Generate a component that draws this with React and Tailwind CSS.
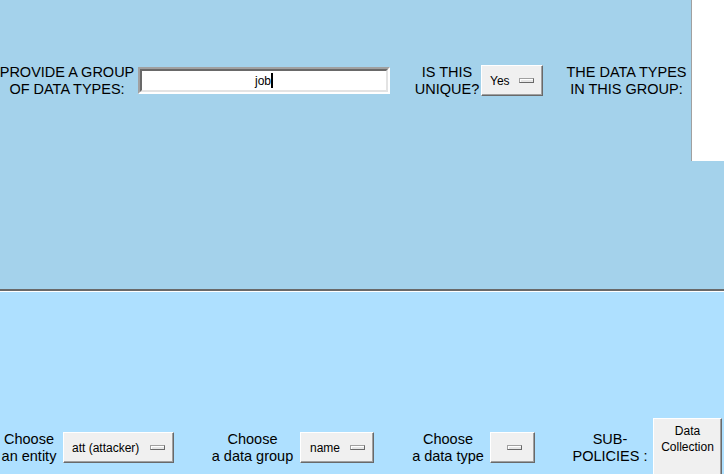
import React from "react";

const LABEL = { fontFamily: '"Liberation Sans", Arial, sans-serif' };
const UI = { fontFamily: '"Liberation Sans", Arial, sans-serif' };

function Label({ lines, w, ml = 0, mlClass }) {
  return (
    <div
      className={`flex flex-col items-center justify-center shrink-0 text-[14.5px] leading-[16.5px] text-black ${mlClass || ""} ${w}`}
      style={LABEL}
    >
      {lines.map((l, i) => (
        <span key={i} className="whitespace-nowrap">
          {l}
        </span>
      ))}
    </div>
  );
}

function Indicator() {
  return (
    <span className="block w-[15px] h-[5px] shrink-0 bg-[#e6e6e6] border border-t-[#a0a0a0] border-l-[#a0a0a0] border-r-[#696969] border-b-[#696969] shadow-[inset_1px_1px_0_#ffffff]" />
  );
}

function MenuButton({ text, cls }) {
  return (
    <div
      className={`h-[31px] shrink-0 bg-[#f0f0f0] border border-t-white border-l-white border-r-[#696969] border-b-[#696969] shadow-[inset_-1px_-1px_0_#a0a0a0] flex items-center text-[12px] text-black ${cls}`}
      style={UI}
    >
      {text ? <span className="whitespace-nowrap">{text}</span> : null}
      <Indicator />
    </div>
  );
}

export default function App() {
  return (
    <div className="w-[724px] h-[474px] overflow-hidden flex flex-col">
      {/* top panel */}
      <div className="h-[289px] shrink-0 bg-[#a4d2eb]">
        <div className="flex items-center">
          <Label lines={["PROVIDE A GROUP", "OF DATA TYPES:"]} w="w-[134px]" />
          <div className="ml-[4px] w-[252px] h-[27px] shrink-0 border-2 border-t-[#a0a0a0] border-l-[#a0a0a0] border-r-white border-b-white">
            <div className="w-full h-full border-2 border-t-[#696969] border-l-[#696969] border-r-[#e3e3e3] border-b-[#e3e3e3] bg-white flex items-center justify-center text-[12px] text-black" style={UI}>
              <span>job</span>
              <span className="block w-[2px] h-[15px] bg-black" />
            </div>
          </div>
          <Label lines={["IS THIS", "UNIQUE?"]} w="w-[64px]" mlClass="ml-[25px]" />
          <MenuButton text="Yes" cls="ml-[2px] w-[62px] justify-between pl-[8px] pr-[8px]" />
          <Label lines={["THE DATA TYPES", "IN THIS GROUP:"]} w="w-[125px]" mlClass="ml-[21px]" />
          <div className="ml-[2px] w-[80px] h-[161px] shrink-0 bg-white border-l border-l-[#a0a0a0]" />
        </div>
      </div>
      {/* separator */}
      <div className="h-[2px] shrink-0 bg-[#696969]" />
      <div className="h-[1px] shrink-0 bg-white" />
      {/* bottom panel */}
      <div className="flex-1 bg-[#aee0ff] pt-[126px]">
        <div className="flex items-center">
          <Label lines={["Choose", "an entity"]} w="w-[58px]" />
          <MenuButton text="att (attacker)" cls="ml-[5px] w-[111px] justify-between pl-[8px] pr-[8px]" />
          <Label lines={["Choose", "a data group"]} w="w-[85px]" mlClass="ml-[36px]" />
          <MenuButton text="name" cls="ml-[5px] w-[74px] justify-between pl-[9px] pr-[8px]" />
          <Label lines={["Choose", "a data type"]} w="w-[74px]" mlClass="ml-[37px]" />
          <MenuButton text="" cls="ml-[5px] w-[45px] justify-end pr-[12px]" />
          <Label lines={["SUB-", "POLICIES :"]} w="w-[76px]" mlClass="ml-[37px]" />
          <div
            className="ml-[5px] w-[69px] h-[59px] shrink-0 bg-[#f0f0f0] border border-t-white border-l-white border-r-[#696969] border-b-[#696969] shadow-[inset_-1px_-1px_0_#a0a0a0] flex flex-col items-center pt-[5px] text-[12px] leading-[15.5px] text-black"
            style={UI}
          >
            <span>Data</span>
            <span>Collection</span>
          </div>
        </div>
      </div>
    </div>
  );
}
